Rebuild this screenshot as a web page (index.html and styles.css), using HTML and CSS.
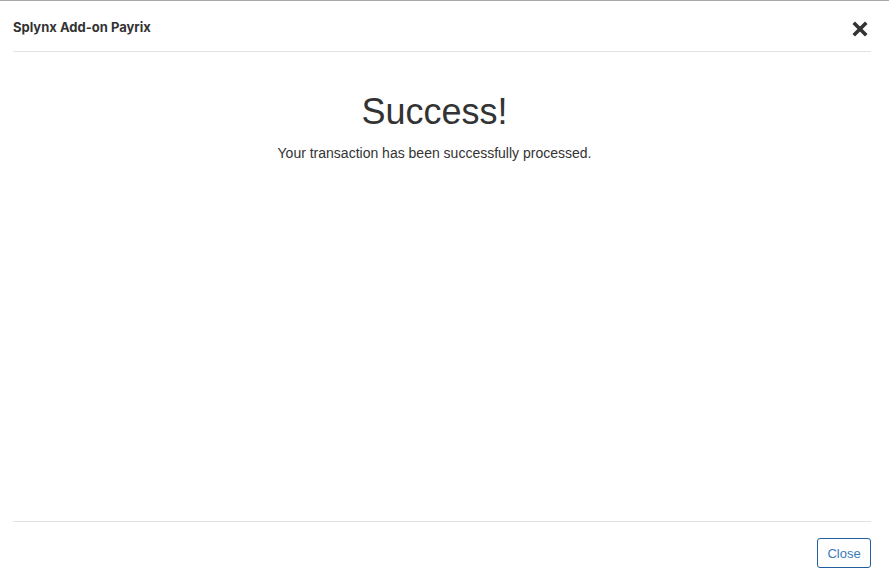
FILE: index.html
```html
<!DOCTYPE html>
<html>
<head>
<meta charset="utf-8">
<link rel="stylesheet" href="styles.css">
</head>
<body>
<div class="modal">
  <div class="modal-header">
    <h4 class="modal-title">Splynx Add-on Payrix</h4>
    <button class="close-x" aria-label="Close">
      <svg width="16" height="16" viewBox="0 0 16 16"><path d="M3 3 L13 13 M13 3 L3 13" stroke="#333" stroke-width="3.6" stroke-linecap="square"/></svg>
    </button>
  </div>
  <div class="modal-body">
    <h1 class="success">Success!</h1>
    <p class="message">Your transaction has been successfully processed.</p>
  </div>
  <div class="modal-footer">
    <button class="btn-close">Close</button>
  </div>
</div>
</body>
</html>
```
FILE: styles.css
```css
html, body {
  margin: 0;
  padding: 0;
  background: #fff;
}
.modal {
  height: 579px;
  box-sizing: border-box;
  border-top: 1px solid #a9a9a9;
  display: flex;
  flex-direction: column;
  padding: 0 18px 0 13px;
  color: #333;
}
.modal-header {
  height: 50px;
  display: flex;
  align-items: center;
  justify-content: space-between;
  border-bottom: 1px solid #e2e2e2;
}
.modal-title {
  margin: 0;
  font-family: Inter, "Noto Sans", sans-serif;
  font-weight: 700;
  font-size: 13px;
  color: #333;
  padding-top: 1px;
}
.close-x {
  border: 0;
  background: none;
  padding: 0;
  width: 16px;
  height: 16px;
  margin-right: 3px;
  margin-top: 6px;
  display: flex;
}
.modal-body {
  flex: 1;
  text-align: center;
  font-family: "Liberation Sans", Arial, sans-serif;
  border-bottom: 1px solid #e2e2e2;
  padding-right: 15px;
}
.success {
  margin: 38px 0 0;
  font-size: 36px;
  font-weight: 400;
  line-height: 44px;
  color: #333;
}
.message {
  margin: 9px 0 0;
  font-size: 14px;
  line-height: 20px;
  color: #333;
}
.modal-footer {
  height: 57px;
  display: flex;
  justify-content: flex-end;
  align-items: flex-start;
  padding-top: 16px;
  box-sizing: border-box;
}
.btn-close {
  width: 54px;
  height: 30px;
  border: 1px solid #1f5f9f;
  border-radius: 3px;
  background: #fff;
  color: #3a79b8;
  font-family: "Liberation Sans", Arial, sans-serif;
  font-size: 13px;
  padding: 0;
}
```
